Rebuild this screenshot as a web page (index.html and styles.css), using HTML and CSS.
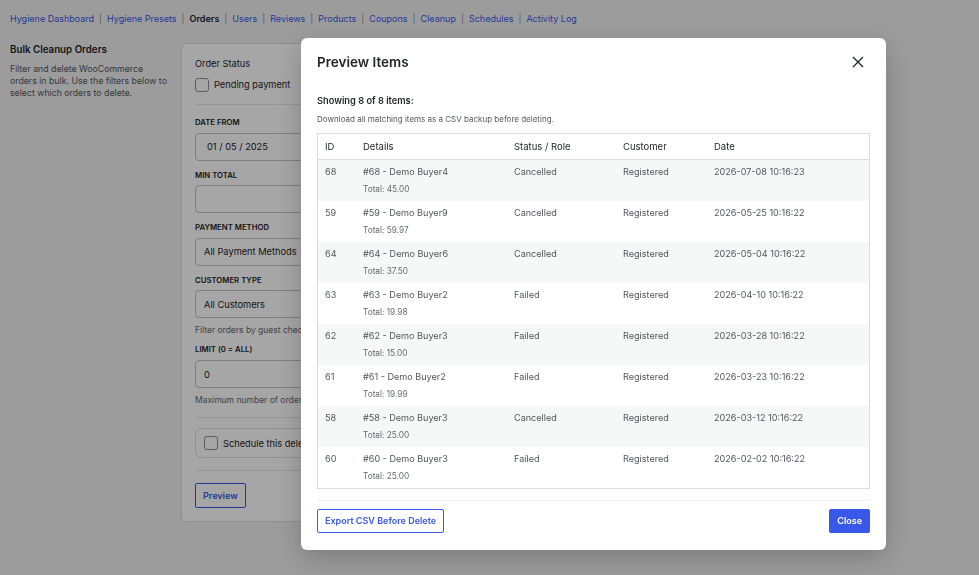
FILE: index.html
```html
<!DOCTYPE html>
<html>
<head>
<meta charset="utf-8">
<link rel="stylesheet" href="styles.css">
</head>
<body>
<div class="page">
  <nav class="tabs">
    <a class="tab">Hygiene Dashboard</a><span class="sep">|</span>
    <a class="tab">Hygiene Presets</a><span class="sep">|</span>
    <a class="tab current">Orders</a><span class="sep">|</span>
    <a class="tab">Users</a><span class="sep">|</span>
    <a class="tab">Reviews</a><span class="sep">|</span>
    <a class="tab">Products</a><span class="sep">|</span>
    <a class="tab">Coupons</a><span class="sep">|</span>
    <a class="tab">Cleanup</a><span class="sep">|</span>
    <a class="tab">Schedules</a><span class="sep">|</span>
    <a class="tab">Activity Log</a>
  </nav>
  <div class="layout">
    <aside class="intro">
      <h2 class="intro-title">Bulk Cleanup Orders</h2>
      <p class="intro-text">Filter and delete WooCommerce orders in bulk. Use the filters below to select which orders to delete.</p>
    </aside>
    <section class="card">
      <div class="group-label">Order Status</div>
      <label class="check-row"><span class="checkbox"></span>Pending payment</label>
      <hr class="divider first">
      <div class="field">
        <div class="field-label">Date From</div>
        <div class="input date">01 / 05 / 2025</div>
      </div>
      <div class="field">
        <div class="field-label">Min Total</div>
        <div class="input"></div>
      </div>
      <div class="field">
        <div class="field-label">Payment Method</div>
        <div class="input">All Payment Methods</div>
      </div>
      <div class="field ctype">
        <div class="field-label">Customer Type</div>
        <div class="input">All Customers</div>
        <p class="help">Filter orders by guest checkout or registered customers.</p>
      </div>
      <div class="field limit">
        <div class="field-label">Limit (0 = All)</div>
        <div class="input">0</div>
        <p class="help">Maximum number of orders to delete in one run.</p>
      </div>
      <hr class="divider mid">
      <label class="schedule"><span class="checkbox"></span><span class="clip">Schedule this deletion</span></label>
      <hr class="divider last">
      <button class="btn btn-outline">Preview</button>
    </section>
  </div>
</div>

<div class="overlay"></div>

<div class="modal">
  <div class="modal-head">
    <h1 class="modal-title">Preview Items</h1>
    <svg class="close-x" width="12" height="12" viewBox="0 0 12 12"><path d="M1 1L11 11M11 1L1 11" stroke="#1d2327" stroke-width="1.3" fill="none"/></svg>
  </div>
  <div class="summary">Showing 8 of 8 items:</div>
  <div class="note">Download all matching items as a CSV backup before deleting.</div>
  <div class="table-wrap">
    <table class="items">
      <colgroup>
        <col class="c-id"><col class="c-det"><col class="c-st"><col class="c-cu"><col>
      </colgroup>
      <thead>
        <tr><th>ID</th><th>Details</th><th>Status / Role</th><th>Customer</th><th>Date</th></tr>
      </thead>
      <tbody>
        <tr><td>68</td><td>#68 - Demo Buyer4<span class="sub">Total: 45.00</span></td><td>Cancelled</td><td>Registered</td><td>2026-07-08 10:16:23</td></tr>
        <tr><td>59</td><td>#59 - Demo Buyer9<span class="sub">Total: 59.97</span></td><td>Cancelled</td><td>Registered</td><td>2026-05-25 10:16:22</td></tr>
        <tr><td>64</td><td>#64 - Demo Buyer6<span class="sub">Total: 37.50</span></td><td>Cancelled</td><td>Registered</td><td>2026-05-04 10:16:22</td></tr>
        <tr><td>63</td><td>#63 - Demo Buyer2<span class="sub">Total: 19.98</span></td><td>Failed</td><td>Registered</td><td>2026-04-10 10:16:22</td></tr>
        <tr><td>62</td><td>#62 - Demo Buyer3<span class="sub">Total: 15.00</span></td><td>Failed</td><td>Registered</td><td>2026-03-28 10:16:22</td></tr>
        <tr><td>61</td><td>#61 - Demo Buyer2<span class="sub">Total: 19.99</span></td><td>Failed</td><td>Registered</td><td>2026-03-23 10:16:22</td></tr>
        <tr><td>58</td><td>#58 - Demo Buyer3<span class="sub">Total: 25.00</span></td><td>Cancelled</td><td>Registered</td><td>2026-03-12 10:16:22</td></tr>
        <tr><td>60</td><td>#60 - Demo Buyer3<span class="sub">Total: 25.00</span></td><td>Failed</td><td>Registered</td><td>2026-02-02 10:16:22</td></tr>
      </tbody>
    </table>
  </div>
  <div class="modal-foot">
    <button class="btn btn-outline export">Export CSV Before Delete</button>
    <button class="btn btn-primary">Close</button>
  </div>
</div>
</body>
</html>
```

FILE: styles.css
```css
* { box-sizing: border-box; }
html, body { margin: 0; padding: 0; }
body {
  background: #f0f0f1;
  font-family: Inter, "Liberation Sans", Arial, sans-serif;
  color: #1d2327;
  font-size: 9.25px;
  width: 979px;
  height: 575px;
  overflow: hidden;
}
.page { padding: 12px 10px 0; }

.tabs { display: flex; align-items: center; height: 14px; line-height: 14px; font-size: 9px; }
.tab { color: #3858e9; }
.tab.current { color: #1d2327; font-weight: 600; }
.sep { color: #8c8f94; margin: 0 5px; }

.layout { display: grid; grid-template-columns: 160px 400px; column-gap: 11px; margin-top: 17px; }
.intro-title { margin: 0; font-size: 9.75px; font-weight: 600; line-height: 14px; }
.intro-text { margin: 6px 0 0; font-size: 8.75px; line-height: 12px; color: #50575e; }

.card {
  background: #fff;
  border: 1px solid #dcdcde;
  border-radius: 5px;
  padding: 13px 13px 13px;
}
.group-label { font-size: 9.25px; line-height: 14px; }
.check-row { display: flex; align-items: center; gap: 5px; margin-top: 7px; font-size: 9.25px; line-height: 14px; }
.checkbox {
  display: inline-block;
  width: 14px; height: 14px;
  border: 1px solid #8c8f94;
  border-radius: 3px;
  background: #fff;
  flex: none;
}
.divider { border: 0; border-top: 1px solid #e6e6e8; margin: 11px 0; }
.divider.first { margin: 12px 0 11px; }
.divider.mid { margin: 11px 0 10px; }
.divider.last { margin: 12px 0 12px; }

.field { margin-bottom: 8px; }
.field-label { font-size: 7.75px; font-weight: 600; text-transform: uppercase; line-height: 12px; color: #1d2327; }
.input {
  margin-top: 4.5px;
  height: 28px;
  border: 1px solid #c3c4c7;
  border-radius: 4px;
  background: #fff;
  padding: 0 8px;
  display: flex; align-items: center;
  font-size: 9.25px;
  width: 100%;
}
.input.date { padding-left: 11px; }
.help {
  margin: 6px 0 0;
  font-size: 8.5px;
  line-height: 12px;
  color: #646970;
  white-space: nowrap;
  overflow: hidden;
  max-width: 106px;
}
.field.ctype { margin-bottom: 7px; }
.field.limit { margin-bottom: 0; }
.field.limit .input { margin-top: 5px; }

.schedule {
  display: flex; align-items: center; gap: 5px;
  height: 30px;
  border: 1px solid #dcdcde;
  border-radius: 6px;
  padding: 0 8px;
  font-size: 9.25px;
}
.clip { white-space: nowrap; overflow: hidden; max-width: 80px; }
.btn {
  font-family: inherit;
  font-size: 9px;
  font-weight: 600;
  border-radius: 2px;
  height: 25px;
  padding: 0 7px;
  cursor: pointer;
}
.btn-outline { background: #fff; color: #3858e9; border: 1px solid #3858e9; }
.btn-primary { background: #3858e9; color: #fff; border: 1px solid #3858e9; }

.overlay { position: fixed; inset: 0; background: rgba(0,0,0,0.35); }

.modal {
  position: fixed;
  left: 301px; top: 38px;
  width: 585px;
  background: #fff;
  border-radius: 6px;
  box-shadow: 0 8px 28px rgba(0,0,0,0.22);
  padding: 15px 16px 17px;
}
.modal-head { display: flex; justify-content: space-between; align-items: center; height: 18px; }
.modal-title { margin: 0; font-size: 13.5px; font-weight: 600; line-height: 18px; }
.close-x { margin-right: 6px; }
.summary { margin-top: 24px; font-size: 9.25px; font-weight: 600; line-height: 12px; }
.note { margin-top: 6px; font-size: 8px; line-height: 12px; color: #50575e; }
.table-wrap { margin-top: 8px; border: 1px solid #dcdcde; }
.items { width: 100%; border-collapse: collapse; table-layout: fixed; }
.c-id { width: 38px; }
.c-det { width: 151px; }
.c-st { width: 109px; }
.c-cu { width: 91px; }
.items th {
  text-align: left; font-weight: 400; font-size: 9.5px;
  height: 25px; padding: 0 7px;
  border-bottom: 1px solid #dcdcde;
  color: #1d2327;
}
.items td {
  vertical-align: top;
  padding: 6px 7px 6px;
  font-size: 9.1px;
  line-height: 12px;
  color: #50575e;
  height: 41px;
}
.items tbody tr:nth-child(odd) { background: #f6f7f7; }
.sub { display: block; margin-top: 5px; font-size: 8.25px; color: #646970; }

.modal-foot {
  display: flex; justify-content: space-between; align-items: center;
  margin-top: 11px;
  border-top: 1px solid #f0f0f1;
  padding-top: 8px;
}
.modal-foot .btn { height: 24px; }
```
